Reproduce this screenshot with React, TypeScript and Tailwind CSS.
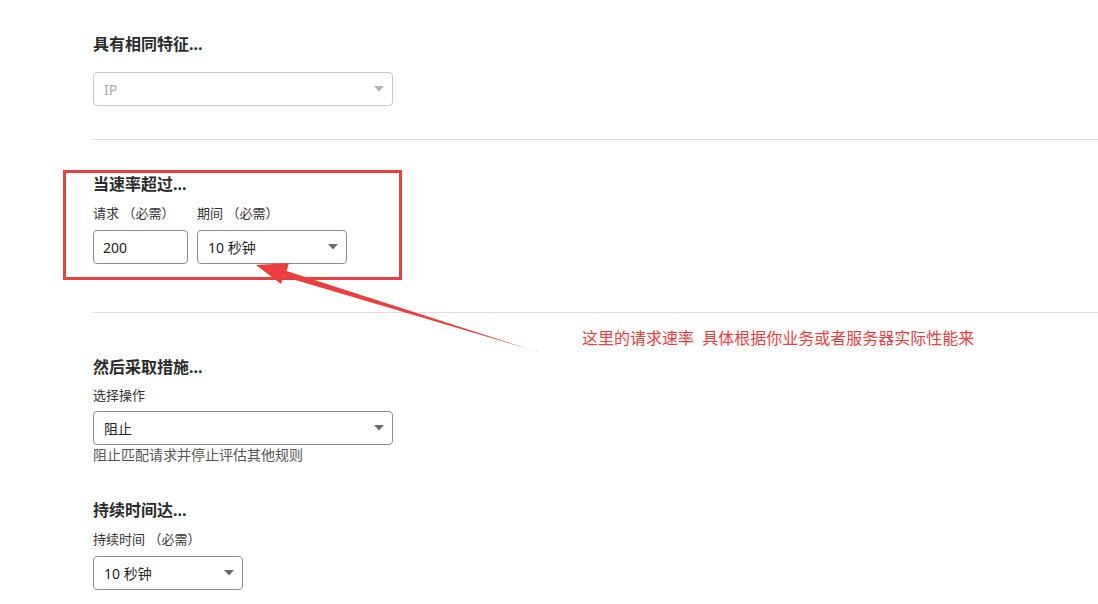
import React from "react";

const font = { fontFamily: '"Noto Sans", "Noto Sans CJK SC", sans-serif' };

function Caret({ muted }: { muted?: boolean }) {
  return (
    <svg width="10" height="6" viewBox="0 0 10 6" className="shrink-0">
      <polygon points="0,0 10,0 5,5.5" fill={muted ? "#b5b5b5" : "#6b6b6b"} />
    </svg>
  );
}

function Select({ value, width, muted }: { value: string; width: string; muted?: boolean }) {
  return (
    <div
      className={`flex h-[34px] items-center justify-between rounded-[4px] border pl-[10px] pr-[8px] text-[14px] ${width} ${
        muted ? "border-[#c8c8c8] text-[#a8a8a8]" : "border-[#8c8c8c] text-[#222]"
      }`}
    >
      <span>{value}</span>
      <Caret muted={muted} />
    </div>
  );
}

function Heading({ children, className = "" }: { children: React.ReactNode; className?: string }) {
  return <h3 className={`h-6 text-[16px] font-bold leading-6 text-[#2b2b2b] ${className}`}>{children}</h3>;
}

function Label({ children, className = "" }: { children: React.ReactNode; className?: string }) {
  return <p className={`h-5 text-[13px] leading-5 text-[#333] ${className}`}>{children}</p>;
}

export default function App() {
  return (
    <div className="relative h-[604px] w-[1098px] overflow-hidden bg-white" style={font}>
      <div className="flex flex-col pl-[93px] pt-[32px]">
        {/* same characteristics */}
        <Heading>具有相同特征...</Heading>
        <div className="mt-4">
          <Select value="IP" width="w-[300px]" muted />
        </div>
        <div className="mt-[33px] h-px bg-[#dcdcdc]" />

        {/* rate */}
        <Heading className="mt-[32px]">当速率超过...</Heading>
        <div className="mt-[7px] flex gap-[9px]">
          <div className="flex w-[95px] flex-col">
            <Label>请求 （必需）</Label>
            <div className="mt-[7px] flex h-[34px] items-center rounded-[4px] border border-[#8c8c8c] pl-[9px] text-[14px] text-[#222]">
              200
            </div>
          </div>
          <div className="flex flex-col">
            <Label>期间 （必需）</Label>
            <div className="mt-[7px]">
              <Select value="10 秒钟" width="w-[150px]" />
            </div>
          </div>
        </div>
        <div className="mt-[48px] h-px bg-[#dcdcdc]" />

        {/* action */}
        <Heading className="mt-[42px]">然后采取措施...</Heading>
        <Label className="mt-[6px]">选择操作</Label>
        <div className="mt-[6px]">
          <Select value="阻止" width="w-[300px]" />
        </div>
        <p className="h-5 text-[14px] leading-5 text-[#555]">阻止匹配请求并停止评估其他规则</p>

        {/* duration */}
        <Heading className="mt-[33px]">持续时间达...</Heading>
        <Label className="mt-[7px]">持续时间 （必需）</Label>
        <div className="mt-[7px]">
          <Select value="10 秒钟" width="w-[150px]" />
        </div>
      </div>

      {/* annotation overlay */}
      <div className="absolute left-[63px] top-[170px] h-[110px] w-[339px] border-[3px] border-[#e8403f]" />
      <svg className="pointer-events-none absolute left-0 top-0" width="1098" height="604">
        <polygon
          points="256,265 289,263 286.5,271 538.5,352.3 537.5,351.7 283.5,276.5 281,284"
          fill="#ea3f3e"
        />
      </svg>
      <p className="absolute left-[582px] top-[328px] text-[16px] leading-5 text-[#e8403f]">
        这里的请求速率&nbsp;&nbsp;具体根据你业务或者服务器实际性能来
      </p>
    </div>
  );
}
